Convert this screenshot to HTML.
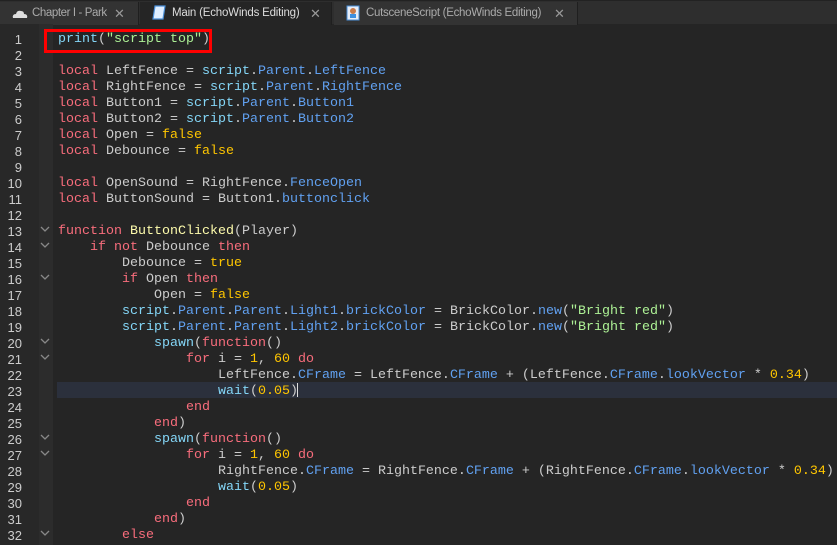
<!DOCTYPE html>
<html><head><meta charset="utf-8"><style>
*{margin:0;padding:0;box-sizing:border-box}
html,body{width:837px;height:545px;overflow:hidden}
body{background:#252525;position:relative;font-family:"Liberation Sans",sans-serif}
.bar{position:absolute;left:0;top:0;width:837px;height:24px;background:#2e2e2e;border-top:1px solid #222}
.tab{position:absolute;top:1px;height:23px;color:#aaa;font-size:11.5px;line-height:23px;border-right:1px solid #1f1f1f;background:#333;white-space:nowrap}
.tab.active{background:#252525;color:#ddd}
.tab .x{position:absolute;font-size:13px;color:#999}
.gut{position:absolute;left:0;top:24px;width:39px;height:521px;background:#282828}
.fold{position:absolute;left:39px;top:24px;width:14px;height:521px;background:#2c2c2c}
.hl{position:absolute;left:57px;top:382px;width:780px;height:16px;background:#2b303c}
.code{position:absolute;left:0;top:32px;font-family:"Liberation Mono",monospace;font-size:13.33px;line-height:16px;color:#cccccc}
.code div{height:16px;padding-left:58px;white-space:pre}
.ln{position:absolute;left:0;top:32px;width:22px;font-family:"Liberation Sans",sans-serif;font-size:13px;line-height:16px;color:#ccc;text-align:right}
.ln div{height:16px}
.k{color:#f86d7c}.b{color:#84d6f7}.p{color:#61a1f1}.s{color:#adf195}.n{color:#ffc600}.f{color:#fdfbac}
.box{position:absolute;left:44px;top:29px;width:168px;height:24px;border:3px solid #f00}
.cur{position:absolute;left:297px;top:383px;width:1px;height:14px;background:#ddd}
</style></head><body>
<div class="bar">
 <div class="tab" style="left:0;width:139px">
  <svg style="position:absolute;left:12px;top:7px" width="16" height="10"><path d="M1 9 Q0 5 4 5 Q5 1 9 2 Q12 2 12 5 Q16 5 15 9 Z" fill="#ddd"/></svg>
  <span style="position:absolute;left:32px;letter-spacing:-0.4px">Chapter I - Park</span><span class="x" style="left:114px">✕</span></div>
 <div class="tab active" style="left:140px;width:192px">
  <svg style="position:absolute;left:12px;top:3px" width="14" height="17"><path d="M3 1 H13 L11 14 H1 Z" fill="#dfeeff" stroke="#4a8fd8" stroke-width="1.2"/></svg>
  <span style="position:absolute;left:32px;letter-spacing:-0.2px">Main (EchoWinds Editing)</span><span class="x" style="left:170px">✕</span></div>
 <div class="tab" style="left:334px;width:244px">
  <svg style="position:absolute;left:12px;top:3px" width="14" height="17"><rect x="1" y="1" width="12" height="14" fill="#e8eef8" stroke="#4a8fd8"/><circle cx="7" cy="6" r="3" fill="#c87a4a"/><rect x="4" y="9" width="6" height="4" fill="#3d8fe0"/></svg>
  <span style="position:absolute;left:32px;letter-spacing:-0.3px">CutsceneScript (EchoWinds Editing)</span><span class="x" style="left:220px">✕</span></div>
</div>
<div class="gut"></div><div class="fold"></div>
<div class="hl"></div>
<div class="ln">
<div>1</div><div>2</div><div>3</div><div>4</div><div>5</div><div>6</div><div>7</div><div>8</div><div>9</div><div>10</div><div>11</div><div>12</div><div>13</div><div>14</div><div>15</div><div>16</div><div>17</div><div>18</div><div>19</div><div>20</div><div>21</div><div>22</div><div>23</div><div>24</div><div>25</div><div>26</div><div>27</div><div>28</div><div>29</div><div>30</div><div>31</div><div>32</div>
</div>
<svg style="position:absolute;left:0;top:0" width="60" height="545">
<g fill="none" stroke="#888" stroke-width="1.3">
<path d="M41 227 L45 231 L49 227"/><path d="M41 243 L45 247 L49 243"/><path d="M41 275 L45 279 L49 275"/><path d="M41 339 L45 343 L49 339"/><path d="M41 355 L45 359 L49 355"/><path d="M41 435 L45 439 L49 435"/><path d="M41 451 L45 455 L49 451"/><path d="M41 531 L45 535 L49 531"/>
</g></svg>
<div class="code"><div><span class="b">print</span>(<span class="s">"script top"</span>)</div><div></div><div><span class="k">local</span> LeftFence = <span class="b">script</span>.<span class="p">Parent</span>.<span class="p">LeftFence</span></div><div><span class="k">local</span> RightFence = <span class="b">script</span>.<span class="p">Parent</span>.<span class="p">RightFence</span></div><div><span class="k">local</span> Button1 = <span class="b">script</span>.<span class="p">Parent</span>.<span class="p">Button1</span></div><div><span class="k">local</span> Button2 = <span class="b">script</span>.<span class="p">Parent</span>.<span class="p">Button2</span></div><div><span class="k">local</span> Open = <span class="n">false</span></div><div><span class="k">local</span> Debounce = <span class="n">false</span></div><div></div><div><span class="k">local</span> OpenSound = RightFence.<span class="p">FenceOpen</span></div><div><span class="k">local</span> ButtonSound = Button1.<span class="p">buttonclick</span></div><div></div><div><span class="k">function</span> <span class="f">ButtonClicked</span>(Player)</div><div>    <span class="k">if not</span> Debounce <span class="k">then</span></div><div>        Debounce = <span class="n">true</span></div><div>        <span class="k">if</span> Open <span class="k">then</span></div><div>            Open = <span class="n">false</span></div><div>        <span class="b">script</span>.<span class="p">Parent</span>.<span class="p">Parent</span>.<span class="p">Light1</span>.<span class="p">brickColor</span> = BrickColor.<span class="p">new</span>(<span class="s">"Bright red"</span>)</div><div>        <span class="b">script</span>.<span class="p">Parent</span>.<span class="p">Parent</span>.<span class="p">Light2</span>.<span class="p">brickColor</span> = BrickColor.<span class="p">new</span>(<span class="s">"Bright red"</span>)</div><div>            <span class="b">spawn</span>(<span class="k">function</span>()</div><div>                <span class="k">for</span> i = <span class="n">1</span>, <span class="n">60</span> <span class="k">do</span></div><div>                    LeftFence.<span class="p">CFrame</span> = LeftFence.<span class="p">CFrame</span> + (LeftFence.<span class="p">CFrame</span>.<span class="p">lookVector</span> * <span class="n">0.34</span>)</div><div>                    <span class="b">wait</span>(<span class="n">0.05</span>)</div><div>                <span class="k">end</span></div><div>            <span class="k">end</span>)</div><div>            <span class="b">spawn</span>(<span class="k">function</span>()</div><div>                <span class="k">for</span> i = <span class="n">1</span>, <span class="n">60</span> <span class="k">do</span></div><div>                    RightFence.<span class="p">CFrame</span> = RightFence.<span class="p">CFrame</span> + (RightFence.<span class="p">CFrame</span>.<span class="p">lookVector</span> * <span class="n">0.34</span>)</div><div>                    <span class="b">wait</span>(<span class="n">0.05</span>)</div><div>                <span class="k">end</span></div><div>            <span class="k">end</span>)</div><div>        <span class="k">else</span></div></div>
<div class="cur"></div>
<div class="box"></div>
</body></html>
